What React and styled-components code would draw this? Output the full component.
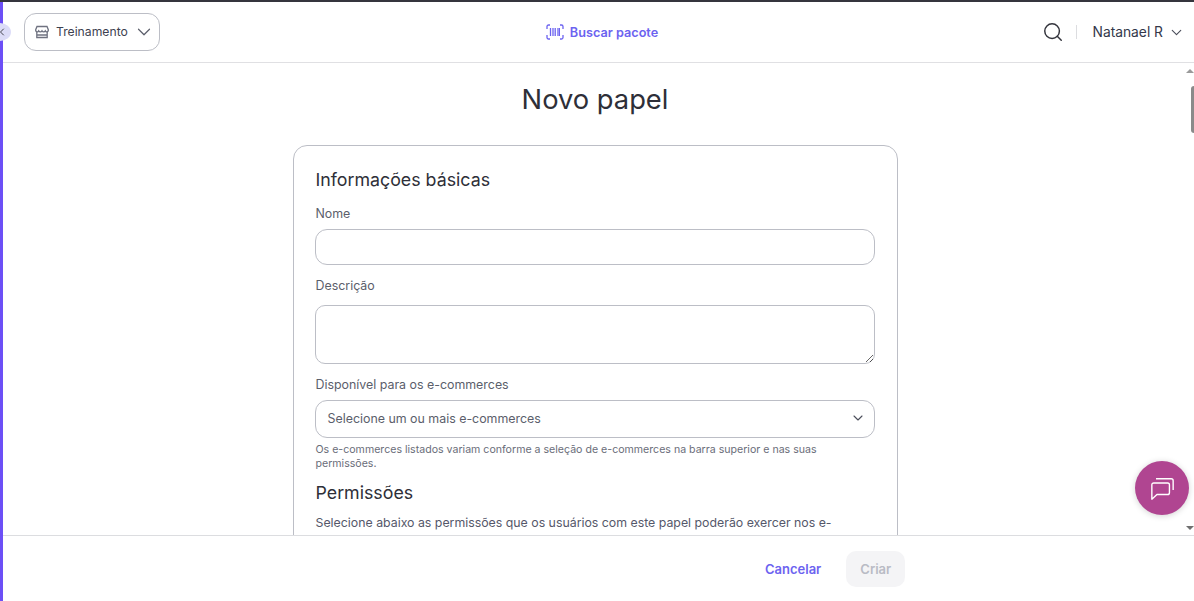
import React from "react";
import styled, { createGlobalStyle } from "styled-components";
import { ChevronDown, ChevronLeft, Search } from "lucide-react";

const GlobalStyle = createGlobalStyle`
  html, body {
    margin: 0;
    height: 100%;
    overflow: hidden;
    background: #fff;
  }
  * {
    box-sizing: border-box;
  }
  body {
    font-family: "Inter", "Liberation Sans", sans-serif;
    color: #2e2f38;
  }
`;

const Shell = styled.div`
  position: relative;
  width: 1194px;
  height: 601px;
  display: flex;
  flex-direction: column;
  border-top: 2px solid #35353d;
  overflow: hidden;
`;

const Body = styled.div`
  flex: 1;
  min-height: 0;
  display: flex;
`;

const Rail = styled.div`
  width: 3px;
  background: #6c4ff6;
`;

const Column = styled.div`
  flex: 1;
  min-width: 0;
  display: flex;
  flex-direction: column;
`;

const Header = styled.header`
  height: 61px;
  flex: none;
  display: grid;
  grid-template-columns: 1fr auto 1fr;
  align-items: center;
  padding: 0 9px 0 21px;
  border-bottom: 1px solid #e0e0e3;
`;

const StoreButton = styled.button`
  justify-self: start;
  height: 38px;
  width: 136px;
  display: flex;
  align-items: center;
  padding: 0 4px 1px 9px;
  gap: 6px;
  background: #fff;
  border: 1px solid #bcbec6;
  border-radius: 12px;
  font: 400 12.2px "Inter", sans-serif;
  color: #3d4150;
  white-space: nowrap;

  svg {
    flex: none;
  }
`;

const Scan = styled.a`
  display: flex;
  align-items: center;
  gap: 6px;
  font-size: 12.7px;
  font-weight: 600;
  color: #6c63f0;
  margin-right: 5px;

  svg {
    flex: none;
  }
`;

const UserArea = styled.div`
  justify-self: end;
  display: flex;
  align-items: center;
`;

const Divider = styled.span`
  width: 1px;
  height: 14px;
  background: #dcdde0;
  margin: 0 15px 0 12px;
`;

const UserName = styled.span`
  font-size: 13.8px;
  color: #33384a;
  margin-right: 5px;
`;

const Main = styled.main`
  flex: 1;
  min-height: 0;
  overflow: hidden;
  display: flex;
  flex-direction: column;
  align-items: center;
  padding-right: 7px;
`;

const Title = styled.h1`
  margin: 20px 0 28px;
  font-size: 27.3px;
  line-height: 34px;
  font-weight: 400;
  color: #2e2f38;
`;

const Card = styled.section`
  width: 605px;
  flex: none;
  padding: 22px 22px 40px;
  border: 1px solid #bcbec6;
  border-radius: 14px;
`;

const SectionTitle = styled.h2`
  margin: ${(props) => props.$top || 0}px 0 0;
  font-size: 17.8px;
  line-height: 24px;
  font-weight: 400;
  color: #2e2f38;
`;

const Label = styled.label`
  display: block;
  margin-top: ${(props) => props.$top}px;
  margin-bottom: ${(props) => props.$bottom}px;
  font-size: 12.4px;
  line-height: 18px;
  color: #5b5e6b;
`;

const TextInput = styled.input`
  display: block;
  width: calc(100% + 1px);
  height: 36px;
  margin-left: -1px;
  border: 1px solid #bcbec6;
  border-radius: 12px;
  background: #fff;
`;

const TextArea = styled.textarea`
  display: block;
  width: calc(100% + 1px);
  height: 59px;
  margin: 0 0 0 -1px;
  border: 1px solid #bcbec6;
  border-radius: 10px;
  background: #fff;
  resize: vertical;
`;

const SelectBox = styled.div`
  display: flex;
  align-items: center;
  justify-content: space-between;
  height: 38px;
  margin-left: -1px;
  padding: 0 8px 2px 12px;
  border: 1px solid #bcbec6;
  border-radius: 12px;
  font-size: 12.4px;
  color: #5b5e6b;
`;

const Hint = styled.p`
  margin: 5px 0 0;
  font-size: 10.6px;
  line-height: 14px;
  color: #6a6d79;
`;

const Paragraph = styled.p`
  margin: 8px 0 0;
  font-size: 12.33px;
  line-height: 20px;
  color: #55586a;
`;

const Footer = styled.footer`
  height: 66px;
  flex: none;
  display: flex;
  align-items: center;
  justify-content: flex-start;
  padding: 0 0 0 762px;
  gap: 25px;
  background: #fff;
  border-top: 1px solid #dcdde0;
`;

const LinkButton = styled.button`
  padding: 0;
  background: none;
  border: none;
  font: 600 13px "Inter", sans-serif;
  color: #6c63f0;
`;

const DisabledButton = styled.button`
  width: 59px;
  height: 36px;
  background: #f4f4f6;
  border: none;
  border-radius: 10px;
  font: 600 13px "Inter", sans-serif;
  color: #b9bbc5;
`;

const Collapse = styled.span`
  position: absolute;
  left: -11px;
  top: 21px;
  width: 22px;
  height: 18px;
  padding-left: 7px;
  border-radius: 50%;
  background: #dcdcf8;
  display: flex;
  align-items: center;
  color: #44444f;
`;

const ScrollTrack = styled.div`
  position: absolute;
  right: 0;
  top: 61px;
  bottom: 66px;
  width: 4px;
`;

const ScrollThumb = styled.div`
  position: absolute;
  top: 23px;
  left: 1px;
  width: 3px;
  height: 47px;
  border-radius: 3px 0 0 3px;
  background: #8a8a8a;
`;

const ScrollArrow = styled.div`
  position: absolute;
  left: -4px;
  ${(props) => (props.$down ? "bottom: 5px;" : "top: 6px;")}
  border-left: 4px solid transparent;
  border-right: 4px solid transparent;
  ${(props) => (props.$down ? "border-top: 4px solid #6f6f6f;" : "border-bottom: 4px solid #9a9a9a;")}
`;

const ChatBubble = styled.button`
  position: absolute;
  left: 1135px;
  top: 459px;
  width: 54px;
  height: 54px;
  padding: 0;
  border: none;
  border-radius: 50%;
  background: #b04591;
  box-shadow: 0 1px 6px rgba(0, 0, 0, 0.18);
  display: flex;
  align-items: center;
  justify-content: center;
`;

const StoreIcon = () => (
  <svg width="16" height="16" viewBox="0 0 16 16" fill="none" stroke="#6f7280" strokeWidth="1.3">
    <path d="M3 2.5h10l1.3 3.2v.8a1.6 1.6 0 0 1-3 .4 1.9 1.9 0 0 1-3.3 0 1.9 1.9 0 0 1-3.3 0 1.6 1.6 0 0 1-3-.4v-.8z" />
    <path d="M2.8 8v5.5h10.4V8M2.8 11h10.4" />
  </svg>
);

const BarcodeIcon = () => (
  <svg width="18" height="16" viewBox="0 0 18 16" fill="none" stroke="#6c63f0" strokeWidth="1.3">
    <path d="M1 5V2.5A1.5 1.5 0 0 1 2.5 1H4M14 1h1.5A1.5 1.5 0 0 1 17 2.5V5M17 11v2.5a1.5 1.5 0 0 1-1.5 1.5H14M4 15H2.5A1.5 1.5 0 0 1 1 13.5V11" />
    <path d="M4.5 4v8M7 4v8M9.2 4v8M12 4v8" />
    <path d="M13.5 4v8" strokeWidth="1" />
  </svg>
);

const ChatIcon = () => (
  <svg width="25" height="25" viewBox="0 0 27 27" fill="none" stroke="#fff" strokeWidth="1.5" strokeLinejoin="round">
    <path d="M2 9.5A2 2 0 0 1 4 7.5h15a2 2 0 0 1 2 2V18a2 2 0 0 1-2 2H7.5L2 25z" />
    <path d="M6.5 3h16.5a2 2 0 0 1 2 2v10" />
  </svg>
);

const App = () => (
  <>
    <GlobalStyle />
    <Shell>
      <Body>
        <Rail />
        <Column>
          <Header>
            <StoreButton>
              <StoreIcon />
              Treinamento
              <ChevronDown size={22} strokeWidth={1.3} color="#5b5e6b" style={{ marginLeft: -1 }} />
            </StoreButton>
            <Scan>
              <BarcodeIcon />
              Buscar pacote
            </Scan>
            <UserArea>
              <Search size={22} strokeWidth={1.6} color="#33343c" />
              <Divider />
              <UserName>Natanael R</UserName>
              <ChevronDown size={17} strokeWidth={1.6} color="#4a4d5a" />
            </UserArea>
          </Header>
          <Main>
            <Title>Novo papel</Title>
            <Card>
              <SectionTitle>Informações básicas</SectionTitle>
              <Label $top={13} $bottom={6}>Nome</Label>
              <TextInput />
              <Label $top={12} $bottom={10}>Descrição</Label>
              <TextArea />
              <Label $top={12} $bottom={6}>Disponível para os e-commerces</Label>
              <SelectBox>
                Selecione um ou mais e-commerces
                <ChevronDown size={16} strokeWidth={1.6} color="#4a4d5a" />
              </SelectBox>
              <Hint>
                Os e-commerces listados variam conforme a seleção de e-commerces na barra superior e nas suas
                permissões.
              </Hint>
              <SectionTitle $top={10}>Permissões</SectionTitle>
              <Paragraph>
                Selecione abaixo as permissões que os usuários com este papel poderão exercer nos e-commerces
                selecionados.
              </Paragraph>
            </Card>
          </Main>
          <Footer>
            <LinkButton>Cancelar</LinkButton>
            <DisabledButton disabled>Criar</DisabledButton>
          </Footer>
        </Column>
      </Body>
      <Collapse>
        <ChevronLeft size={12} strokeWidth={2} />
      </Collapse>
      <ScrollTrack>
        <ScrollArrow />
        <ScrollThumb />
        <ScrollArrow $down />
      </ScrollTrack>
      <ChatBubble aria-label="Chat">
        <ChatIcon />
      </ChatBubble>
    </Shell>
  </>
);

export default App;
